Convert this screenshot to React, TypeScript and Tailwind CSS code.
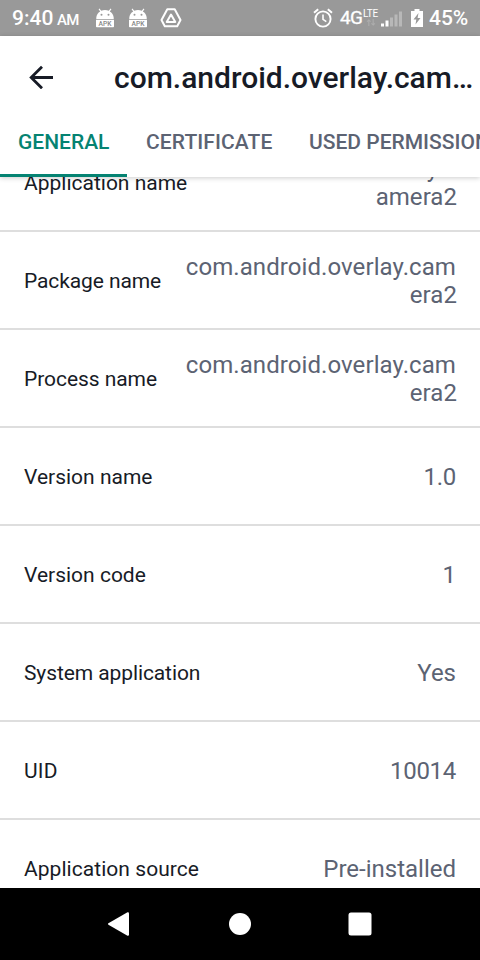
import React from "react";

type Row = { label: string; value: string[]; labelSpacing?: string; valueSpacing?: string };

const rows: Row[] = [
  { label: "Application name", value: ["com.android.overlay.c", "amera2"], valueSpacing: "tracking-[0.05px]" },
  { label: "Package name", value: ["com.android.overlay.cam", "era2"], labelSpacing: "tracking-[-0.1px]", valueSpacing: "tracking-[0.08px]" },
  { label: "Process name", value: ["com.android.overlay.cam", "era2"], labelSpacing: "tracking-[-0.06px]", valueSpacing: "tracking-[0.08px]" },
  { label: "Version name", value: ["1.0"], valueSpacing: "tracking-[-0.3px]" },
  { label: "Version code", value: ["1"] },
  { label: "System application", value: ["Yes"], labelSpacing: "tracking-[-0.1px]" },
  { label: "UID", value: ["10014"], labelSpacing: "tracking-[0.2px]", valueSpacing: "tracking-[-0.3px]" },
  { label: "Application source", value: ["Pre-installed"], labelSpacing: "tracking-[0.05px]" },
];

function ApkIcon() {
  return (
    <svg width="20" height="20" viewBox="0 0 20 20" className="shrink-0">
      <path d="M1.300 11V9.600C1.500 6.600 3 4.600 5.200 3.400L3.600 1.200l.8-.6 1.800 2.200a9.600 9.600 0 0 1 7.600 0L15.600.6l.8.6-1.600 2.200c2.200 1.200 3.700 3.200 3.900 6.200V11z" fill="#fff" />
      <circle cx="6.500" cy="6.700" r="1" fill="#999" />
      <circle cx="13.500" cy="6.700" r="1" fill="#999" />
      <path d="M1 11.800h18v6.700a.8.800 0 0 1-.8.800H1.800a.8.800 0 0 1-.8-.800z" fill="#fff" />
      <text x="10" y="18" textAnchor="middle" textLength="13" lengthAdjust="spacingAndGlyphs" fontSize="7" fontWeight="500" fill="#888" fontFamily="Roboto, sans-serif">APK</text>
    </svg>
  );
}

function StatusBar() {
  return (
    <div className="flex h-9 shrink-0 items-center bg-[#999999] text-white">
      <span className="ml-3 w-[42px] whitespace-nowrap text-[21px] leading-9 font-medium">9:40</span>
      <span className="ml-[3px] w-[22px] pt-[5px] text-[15px] leading-[31px] font-medium tracking-[-0.8px]">AM</span>
      <span className="ml-4 flex gap-[13px]">
        <ApkIcon />
        <ApkIcon />
      </span>
      <svg width="22" height="20" viewBox="0 0 22 20" className="ml-3 shrink-0" fill="none" stroke="#fff" strokeLinejoin="round">
        <path d="M7.300 1.300h7.400L20.500 12l-3.300 6.200H4.800L1.500 12z" strokeWidth="2" />
        <path d="M11 6.500l4.300 7.500H6.700z" strokeWidth="2" />
      </svg>
      <div className="flex-1" />
      <svg width="20" height="20" viewBox="0 0 20 20" fill="none" stroke="#fff" className="mr-[2px] shrink-0">
        <circle cx="10" cy="11" r="7.600" strokeWidth="1.900" />
        <path d="M10 6.500V11.300l3.300 2.400" strokeWidth="1.600" />
        <path d="M1 4.700L5.200 1.200M19 4.700L14.800 1.200" strokeWidth="2" />
      </svg>
      <span className="ml-[5px] w-[23px] pb-px text-[19px] leading-[35px] tracking-[-0.8px] [-webkit-text-stroke:0.3px_white]">4G</span>
      <span className="flex h-9 w-[15px] flex-col items-center pt-[9px]">
        <span className="text-[10px] leading-[10px] tracking-[-0.3px]">LTE</span>
        <svg width="10" height="7" viewBox="0 0 10 8" fill="none" stroke="#adadad" strokeWidth="1.200">
          <path d="M2.500 8V1M.5 3l2-2 2 2M7.500 0v7M5.500 5l2 2 2-2" />
        </svg>
      </span>
      <svg width="22" height="16" viewBox="0 0 22 16" className="mt-[2px] ml-[3px] shrink-0">
        <path d="M0 12.500h3v3H0zM4.500 9.500h3v6h-3z" fill="#fff" />
        <path d="M9 6.500h3v9H9zM13.500 3.500h3v12h-3zM18 .5h3v15h-3z" fill="#b8b8b8" />
      </svg>
      <svg width="12" height="18" viewBox="0 0 12 18" className="ml-2 shrink-0">
        <path d="M0 2h3.500V0h5v2H12v16H0z" fill="#fff" />
        <path d="M7.500 4L2.500 10.500h2.800L4.500 15.500 9.500 9H6.600z" fill="#999" />
      </svg>
      <span className="mr-3 ml-[6px] w-[39px] whitespace-nowrap pt-px text-[21px] leading-[35px] font-medium">45%</span>
    </div>
  );
}

export default function App() {
  return (
    <div className="flex h-[960px] w-[480px] flex-col overflow-hidden bg-white font-[Roboto,sans-serif] text-[#171b26]">
      <StatusBar />
      <header className="z-10 flex h-[141px] shrink-0 flex-col bg-white shadow-[0_1px_5px_rgba(0,0,0,0.2)]">
        <div className="flex h-[84px] items-center">
          <svg width="24" height="24" viewBox="0 0 24 24" className="mb-[2px] ml-[29px] shrink-0" fill="none" stroke="#171b26" strokeWidth="2.800">
            <path d="M24 12.500H2.500M13 1.700L2.200 12.500 13 23.300" />
          </svg>
          <h1 className="ml-[61px] whitespace-nowrap text-[30px] leading-9 font-medium">com.android.overlay.cam…</h1>
        </div>
        <nav className="flex h-[57px] overflow-hidden whitespace-nowrap text-[21px] font-medium text-[#5c6373]">
          <div className="h-[57px] w-[127px] shrink-0 border-b-[3px] border-[#058372] pl-[18px] leading-[44px] text-[#058372]">GENERAL</div>
          <div className="w-[163px] shrink-0 pl-[19px] leading-[44px] tracking-[0.1px]">CERTIFICATE</div>
          <div className="shrink-0 pl-[19px] leading-[44px]">USED PERMISSIONS</div>
        </nav>
      </header>
      <main className="min-h-0 flex-1 overflow-hidden">
        <div className="-mt-[43px]">
          {rows.map((row) => (
            <div key={row.label} className="flex h-[98px] items-center justify-between border-b-2 border-[#dedede] px-6 pt-[2px]">
              <span className={`text-[21px] leading-7 ${row.labelSpacing ?? ""}`}>{row.label}</span>
              <span className={`text-right text-[24px] leading-7 text-[#5c6373] ${row.valueSpacing ?? ""}`}>
                {row.value.map((line, i) => (
                  <span key={line} className={i > 0 ? "-mr-px block" : "block"}>{line}</span>
                ))}
              </span>
            </div>
          ))}
        </div>
      </main>
      <footer className="flex h-[72px] shrink-0 items-center bg-black">
        <svg width="21" height="24" viewBox="0 0 21 24" className="ml-[108px]" fill="#fff">
          <path d="M.4 11.300L19.500.3Q21 0 21 1.500v21Q21 24 19.500 23.700L.4 12.700Q-.4 12 .4 11.300z" />
        </svg>
        <div className="ml-[100px] size-[22px] rounded-full bg-white" />
        <svg width="24" height="24" viewBox="0 0 24 24" className="ml-[97px]" fill="#fff">
          <rect x=".5" y=".5" width="23" height="23" rx="2.500" />
        </svg>
      </footer>
    </div>
  );
}
